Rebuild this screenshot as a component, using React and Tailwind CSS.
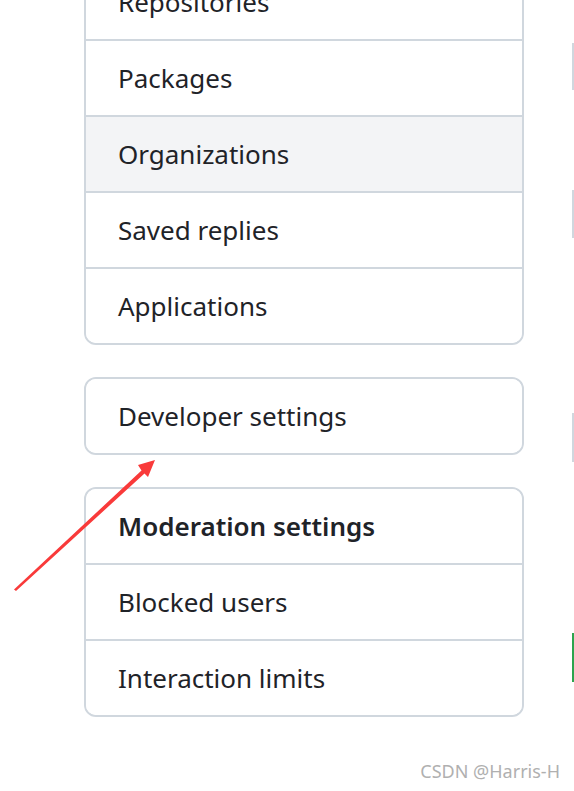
import React from 'react';

const groups = [
  { items: ['Repositories', 'Packages', 'Organizations', 'Saved replies', 'Applications'], active: 'Organizations' },
  { items: ['Developer settings'] },
  { title: 'Moderation settings', items: ['Blocked users', 'Interaction limits'] },
];

function Row({ label, active, bold }) {
  return (
    <div
      className={`box-content h-[74px] flex items-center px-[32px] text-[26px] text-[#1f2328] border-b-2 border-[#d0d7de] last:border-b-0 ${
        active ? 'bg-[#f3f4f6]' : 'bg-white'
      } ${bold ? 'font-semibold' : ''}`}
    >
      {label}
    </div>
  );
}

export default function App() {
  return (
    <div
      className="relative w-[574px] h-[791px] overflow-hidden bg-white"
      style={{ fontFamily: '"Noto Sans", "Open Sans", sans-serif' }}
    >
      <div className="flex pl-[84px]">
        {/* Sidebar */}
        <div className="w-[440px] shrink-0 -mt-[37px] flex flex-col gap-[32px]">
          {groups.map((g, i) => (
            <div key={i} className="border-2 border-[#d0d7de] rounded-[12px] overflow-hidden">
              {g.title && <Row label={g.title} bold />}
              {g.items.map(it => (
                <Row key={it} label={it} active={it === g.active} />
              ))}
            </div>
          ))}
        </div>

        {/* Main column, cut off at the right */}
        <div className="ml-[48px] flex flex-col shrink-0">
          <div className="mt-[43px] h-[47px] w-[40px] border-l-2 border-[#d0d7de]" />
          <div className="mt-[100px] h-[48px] w-[40px] border-l-2 border-[#d0d7de]" />
          <div className="mt-[175px] h-[49px] w-[40px] border-l-2 border-[#d0d7de]" />
          <div className="mt-[171px] h-[49px] w-[40px] border-l-2 border-[#2da44e]" />
        </div>
      </div>

      {/* Annotation arrow */}
      <svg className="absolute left-0 top-0 pointer-events-none" width="574" height="791" viewBox="0 0 574 791">
        <polygon
          points="155,460 148,477 144.5,473.5 16,591 14,589.5 141.5,470.5 138,465"
          fill="#f93a3a"
        />
      </svg>

      <div className="absolute right-[14px] bottom-[6px] text-[18px] text-[#b0b0b0]">CSDN @Harris-H</div>
    </div>
  );
}
